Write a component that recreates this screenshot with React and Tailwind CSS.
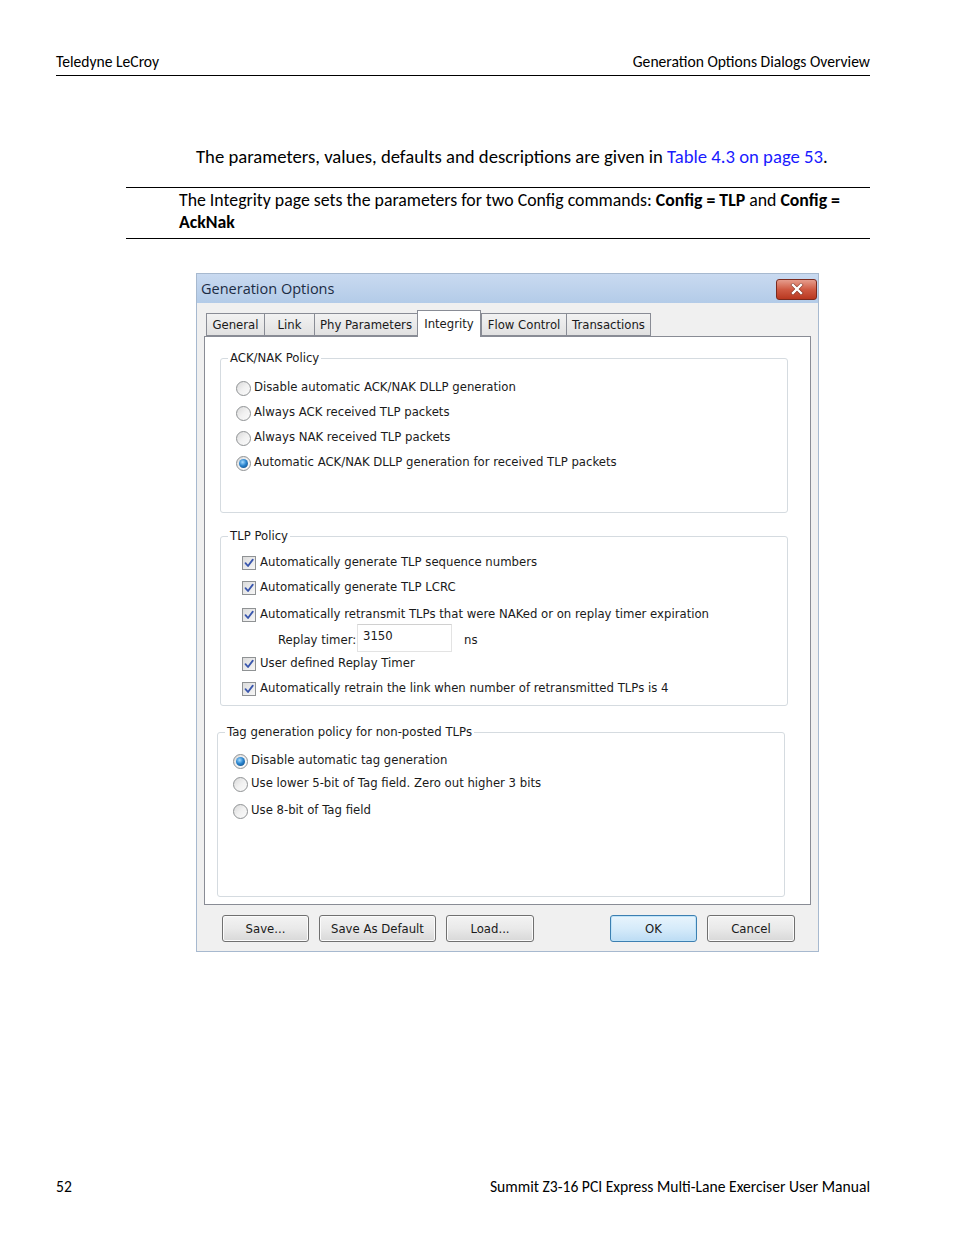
import { useState } from 'react'

const DOC_FONT = "[font-family:Calibri,'Lato',sans-serif]"
const UI_FONT = "[font-family:Tahoma,'DejaVu_Sans',sans-serif]"

const TABS = [
  { label: 'General', w: 'w-[58px]' },
  { label: 'Link', w: 'w-[50px]' },
  { label: 'Phy Parameters', w: 'w-[103px]' },
  { label: 'Integrity', w: 'w-[64px]', active: true },
  { label: 'Flow Control', w: 'w-[85px]' },
  { label: 'Transactions', w: 'w-[85px]' },
]

function Radio({ checked }) {
  return (
    <span className="w-[15px] h-[15px] rounded-full border border-[#8f9294] bg-gradient-to-br from-[#d9d9d9] via-[#f1f1f1] to-[#fbfbfb] flex items-center justify-center shrink-0">
      {checked && (
        <span className="w-[9px] h-[9px] rounded-full bg-[radial-gradient(circle_at_40%_35%,#a6dcff_0%,#2a85cf_45%,#0c3f75_100%)]" />
      )}
    </span>
  )
}

function Check() {
  return (
    <span className="w-[14px] h-[14px] border border-[#8f9294] bg-gradient-to-br from-[#dcdcdc] to-[#f6f6f6] flex items-center justify-center shrink-0">
      <svg width="12" height="12" viewBox="0 0 12 12">
        <path d="M2.5 6.2 L5 9 L9.8 2.6" fill="none" stroke="#3956ad" strokeWidth="1.8" strokeLinecap="round" strokeLinejoin="round" />
      </svg>
    </span>
  )
}

function Group({ title, className, children }) {
  return (
    <fieldset className={`border border-[#d5dbe0] rounded-[3px] ${className}`}>
      <legend className="ml-[7px] px-[2px] leading-[16px]">{title}</legend>
      {children}
    </fieldset>
  )
}

function Btn({ children, w, primary }) {
  return (
    <button
      className={`${w} h-[27px] pt-[2px] rounded-[3px] border text-[11.7px] text-[#1a1a1a] ${
        primary
          ? 'border-[#3c7fb1] bg-gradient-to-b from-[#e8f4fc] via-[#d6ebfa] to-[#bcdcf4] shadow-[inset_0_0_0_1px_#bfe3f8]'
          : 'border-[#707070] bg-gradient-to-b from-[#f3f3f3] via-[#e9e9e9] to-[#d8d8d8] shadow-[inset_0_0_0_1px_#fbfbfb]'
      }`}
    >
      {children}
    </button>
  )
}

export default function App() {
  const [ackPolicy, setAckPolicy] = useState(3)
  const [tagPolicy, setTagPolicy] = useState(0)

  const ackOptions = [
    'Disable automatic ACK/NAK DLLP generation',
    'Always ACK received TLP packets',
    'Always NAK received TLP packets',
    'Automatic ACK/NAK DLLP generation for received TLP packets',
  ]
  const tagOptions = [
    'Disable automatic tag generation',
    'Use lower 5-bit of Tag field. Zero out higher 3 bits',
    'Use 8-bit of Tag field',
  ]

  return (
    <div className={`w-[954px] h-[1235px] bg-white flex flex-col text-black ${DOC_FONT}`}>
      {/* page header */}
      <div className="ml-[56px] mr-[84px] mt-[52px] pb-[4px] border-b border-black flex justify-between text-[15.6px] leading-[19px]">
        <span>Teledyne LeCroy</span>
        <span>Generation Options Dialogs Overview</span>
      </div>

      <p className="ml-[196px] mt-[71px] text-[18.7px] leading-[20px]">
        The parameters, values, defaults and descriptions are given in{' '}
        <span className="text-[#1a1aff]">Table 4.3 on page 53</span>.
      </p>

      <div className="ml-[126px] w-[744px] mt-[20px] border-t border-b border-black pl-[53px] pt-[1px] pb-[5px] text-[17.8px] leading-[22px]">
        The Integrity page sets the parameters for two Config commands: <b>Config = TLP</b> and <b>Config =</b>
        <br />
        <b>AckNak</b>
      </div>

      {/* dialog */}
      <div className={`ml-[196px] mt-[34px] w-[623px] border border-[#a7b9cf] bg-[#f0f0f0] ${UI_FONT}`}>
        <div className="h-[29px] bg-gradient-to-b from-[#c9daf0] to-[#b3cbe8] flex items-center justify-between pl-[4px] pr-[1px]">
          <span className="[font-family:'Open_Sans',sans-serif] text-[14.5px] text-[#1c2c44]">Generation Options</span>
          <span className="w-[41px] h-[21px] mt-[1px] rounded-[3px] border border-[#7b2a1e] bg-gradient-to-b from-[#e59c8c] via-[#cf5a43] to-[#b8371f] flex items-center justify-center">
            <svg width="14" height="12" viewBox="0 0 14 12">
              <path d="M3 2 L11 10 M11 2 L3 10" stroke="#5a1d12" strokeWidth="3.6" strokeLinecap="square" opacity="0.6" />
              <path d="M3 2 L11 10 M11 2 L3 10" stroke="#ffffff" strokeWidth="2.4" strokeLinecap="square" />
            </svg>
          </span>
        </div>

        <div className="px-[7px] pt-[7px] pb-[9px] text-[11.7px] text-[#1a1a1a]">
          {/* tabs */}
          <div className="flex items-end ml-[2px] h-[26px]">
            {TABS.map(t =>
              t.active ? (
                <div key={t.label} className={`${t.w} h-[27px] -mb-px relative bg-white border border-b-0 border-[#898c95] flex items-start justify-center pt-[5px]`}>
                  {t.label}
                </div>
              ) : (
                <div key={t.label} className={`${t.w} h-[23px] pt-[2px] border border-r-0 last:border-r border-[#898c95] bg-gradient-to-b from-[#f2f2f2] to-[#e1e1e1] flex items-center justify-center`}>
                  {t.label}
                </div>
              )
            )}
          </div>

          {/* tab panel */}
          <div className="h-[569px] bg-white border border-[#898c95] flex flex-col pl-[15px] pt-[13px]">
            <Group title="ACK/NAK Policy" className="w-[568px] pb-[39px]">
              <div className="mt-[12px] pl-[15px] flex flex-col gap-[5px]">
                {ackOptions.map((o, i) => (
                  <label key={o} className="h-[20px] flex items-center gap-[3px]" onClick={() => setAckPolicy(i)}>
                    <Radio checked={ackPolicy === i} />
                    {o}
                  </label>
                ))}
              </div>
            </Group>

            <Group title="TLP Policy" className="w-[568px] mt-[15px] pb-[6px]">
              <div className="mt-[9px] pl-[21px] flex flex-col">
                <div className="h-[20px] flex items-center gap-[4px]"><Check />Automatically generate TLP sequence numbers</div>
                <div className="h-[20px] mt-[5px] flex items-center gap-[4px]"><Check />Automatically generate TLP LCRC</div>
                <div className="h-[20px] mt-[7px] flex items-center gap-[4px]"><Check />Automatically retransmit TLPs that were NAKed or on replay timer expiration</div>
                <div className="h-[28px] -mt-px flex items-center">
                  <span className="ml-[36px] w-[79px] mt-[6px] whitespace-nowrap">Replay timer:</span>
                  <span className="w-[95px] h-[28px] border border-[#e3e3e3] border-t-[#d0d0d0] bg-white pl-[5px] pt-[3px] leading-[16px]">3150</span>
                  <span className="ml-[12px] mt-[6px]">ns</span>
                </div>
                <div className="h-[20px] mt-[2px] flex items-center gap-[4px]"><Check />User defined Replay Timer</div>
                <div className="h-[20px] mt-[5px] flex items-center gap-[4px]"><Check />Automatically retrain the link when number of retransmitted TLPs is 4</div>
              </div>
            </Group>

            <Group title="Tag generation policy for non-posted TLPs" className="w-[568px] -ml-[3px] mt-[18px] pb-[75px]">
              <div className="mt-[11px] pl-[15px] flex flex-col">
                {tagOptions.map((o, i) => (
                  <label key={o} className={`h-[20px] flex items-center gap-[3px] ${i === 1 ? 'mt-[3px]' : i === 2 ? 'mt-[7px]' : ''}`} onClick={() => setTagPolicy(i)}>
                    <Radio checked={tagPolicy === i} />
                    {o}
                  </label>
                ))}
              </div>
            </Group>
          </div>

          {/* buttons */}
          <div className="mt-[10px] flex items-center pl-[18px]">
            <Btn w="w-[87px]">Save...</Btn>
            <span className="ml-[10px] flex"><Btn w="w-[117px]">Save As Default</Btn></span>
            <span className="ml-[10px] flex"><Btn w="w-[88px]">Load...</Btn></span>
            <span className="ml-[76px] flex"><Btn w="w-[87px]" primary>OK</Btn></span>
            <span className="ml-[10px] flex"><Btn w="w-[88px]">Cancel</Btn></span>
          </div>
        </div>
      </div>

      {/* page footer */}
      <div className="mt-auto ml-[56px] mr-[84px] mb-[39px] flex justify-between text-[15.6px] leading-[19px]">
        <span>52</span>
        <span>Summit Z3-16 PCI Express Multi-Lane Exerciser User Manual</span>
      </div>
    </div>
  )
}
